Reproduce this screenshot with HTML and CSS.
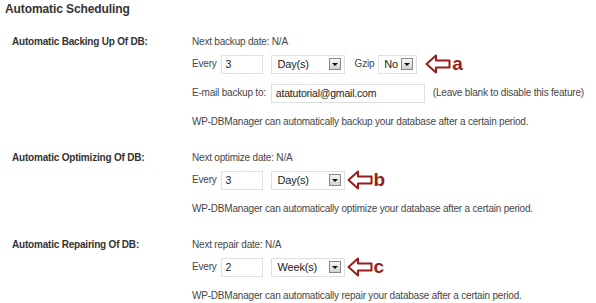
FILE: index.html
```html
<!DOCTYPE html>
<html lang="en">
<head>
    <meta charset="UTF-8">
    <title>Automatic Scheduling</title>
    <link rel="stylesheet" href="styles.css">
</head>
<body>
    <h2 class="title">Automatic Scheduling</h2>

    <div class="section">
        <div class="label">Automatic Backing Up Of DB:</div>
        <div class="fields">
            <div class="line next">Next backup date: N/A</div>
            <div class="line controls">
                <span>Every</span>
                <span class="input num">3</span>
                <span class="select days">Day(s)<i class="drop"></i></span>
                <span class="gzip">Gzip</span>
                <span class="select small">No<i class="drop"></i></span>
                <span class="callout">
                    <svg width="26" height="20" viewBox="0 0 26 20"><path d="M1.5 10 L11 1.5 L11 6.5 L24.5 6.5 L24.5 13.5 L11 13.5 L11 18.5 Z" fill="#fff" stroke="#981d1d" stroke-width="2" stroke-linejoin="round"/></svg>
                    <b>a</b>
                </span>
            </div>
            <div class="line controls">
                <span>E-mail backup to:</span>
                <span class="input email">atatutorial@gmail.com</span>
                <span class="hint">(Leave blank to disable this feature)</span>
            </div>
            <div class="line">WP-DBManager can automatically backup your database after a certain period.</div>
        </div>
    </div>

    <div class="section">
        <div class="label">Automatic Optimizing Of DB:</div>
        <div class="fields">
            <div class="line next">Next optimize date: N/A</div>
            <div class="line controls">
                <span>Every</span>
                <span class="input num">3</span>
                <span class="select days">Day(s)<i class="drop"></i></span>
                <span class="callout tight">
                    <svg width="26" height="20" viewBox="0 0 26 20"><path d="M1.5 10 L11 1.5 L11 6.5 L24.5 6.5 L24.5 13.5 L11 13.5 L11 18.5 Z" fill="#fff" stroke="#981d1d" stroke-width="2" stroke-linejoin="round"/></svg>
                    <b>b</b>
                </span>
            </div>
            <div class="line">WP-DBManager can automatically optimize your database after a certain period.</div>
        </div>
    </div>

    <div class="section">
        <div class="label">Automatic Repairing Of DB:</div>
        <div class="fields">
            <div class="line next">Next repair date: N/A</div>
            <div class="line controls">
                <span>Every</span>
                <span class="input num">2</span>
                <span class="select days">Week(s)<i class="drop"></i></span>
                <span class="callout tight">
                    <svg width="26" height="20" viewBox="0 0 26 20"><path d="M1.5 10 L11 1.5 L11 6.5 L24.5 6.5 L24.5 13.5 L11 13.5 L11 18.5 Z" fill="#fff" stroke="#981d1d" stroke-width="2" stroke-linejoin="round"/></svg>
                    <b>c</b>
                </span>
            </div>
            <div class="line">WP-DBManager can automatically repair your database after a certain period.</div>
        </div>
    </div>
</body>
</html>
```

FILE: styles.css
```css
body {
    margin: 0;
    padding: 0 5px;
    background: #fff;
    font-family: "Liberation Sans", Arial, sans-serif;
    font-size: 10px;
    letter-spacing: -0.2px;
    color: #464646;
}
.title {
    margin: 0;
    font-size: 12px;
    line-height: 18px;
    letter-spacing: -0.1px;
    color: #333;
}
.section {
    display: flex;
    margin-top: 16px;
}
.title + .section {
    margin-top: 14px;
}
.label {
    width: 180px;
    padding-left: 7px;
    font-weight: bold;
    color: #333;
    line-height: 20px;
}
.fields {
    display: flex;
    flex-direction: column;
}
.line {
    height: 20px;
    line-height: 20px;
    display: flex;
    align-items: center;
    white-space: nowrap;
}
.line + .line {
    margin-top: 9px;
}
.next + .line {
    margin-top: 2px;
}
.input {
    display: inline-block;
    height: 19px;
    line-height: 17px;
    border: 1px solid #dfdfdf;
    background: #fff;
    padding: 0 4px;
    color: #222;
    box-sizing: border-box;
    font-size: 10.5px;
    margin-left: 4px;
}
.num {
    width: 42px;
}
.email {
    width: 154px;
    margin-left: 5px;
}
.hint {
    margin-left: 8px;
}
.select {
    display: inline-flex;
    align-items: center;
    justify-content: space-between;
    height: 19px;
    margin-left: 8px;
    border: 1px solid #dfdfdf;
    background: #fff;
    padding: 0 3px 0 6px;
    box-sizing: border-box;
    color: #222;
    font-size: 11px;
}
.days {
    width: 74px;
}
.small {
    width: 39px;
    margin-left: 4px;
    padding-left: 5px;
}
.gzip {
    margin-left: 10px;
}
.drop {
    position: relative;
    width: 12px;
    height: 12px;
    box-sizing: border-box;
    border: 1px solid #888;
    background: linear-gradient(#f6f6f6, #d4d4d4);
}
.drop::after {
    content: "";
    position: absolute;
    left: 2px;
    top: 4px;
    border-left: 3px solid transparent;
    border-right: 3px solid transparent;
    border-top: 3px solid #111;
}
.callout {
    display: inline-flex;
    align-items: center;
    gap: 1px;
    margin-left: 8px;
}
.callout.tight {
    margin-left: 2px;
}
.callout svg {
    display: block;
}
.callout b {
    font-size: 19px;
    color: #981d1d;
    line-height: 18px;
    letter-spacing: 0;
}
```
